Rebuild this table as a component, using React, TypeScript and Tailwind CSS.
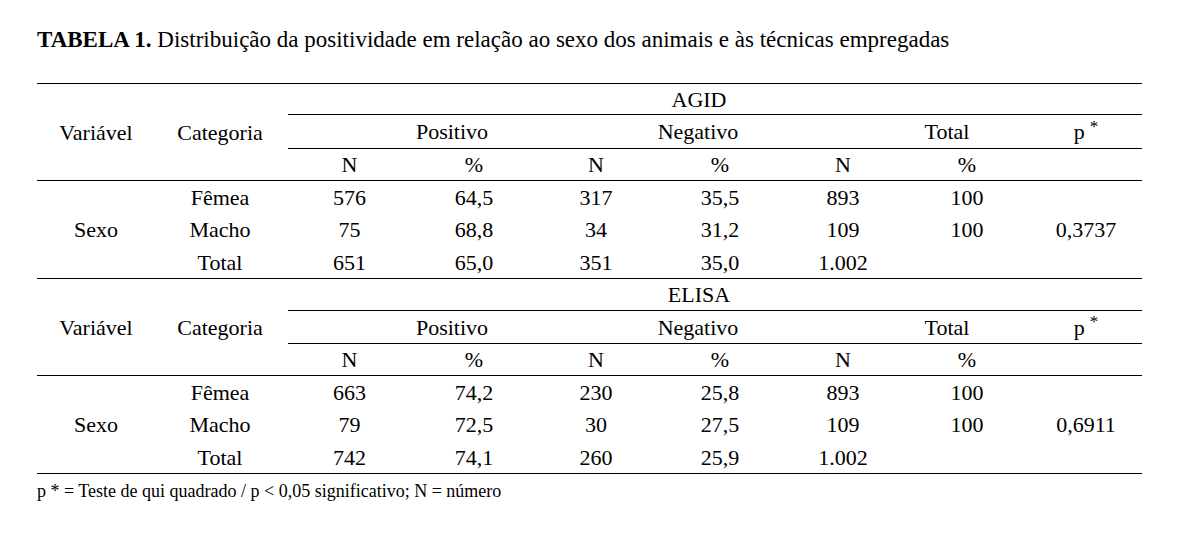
import React from 'react';

type Row = { cat: string; pn: string; pp: string; nn: string; np: string; tn: string; tp: string };

interface SectionProps {
  method: string;
  rows: Row[];
  p: string;
  first?: boolean;
}

const cols = 'grid-cols-[118px_130px_129px_120px_124px_124px_122px_126px_112px]';

const Cell = ({ children, className = '' }: { children?: React.ReactNode; className?: string }) => (
  <div className={`flex items-center justify-center font-['Liberation_Serif'] ${className}`}>{children}</div>
);

const Section = ({ method, rows, p, first }: SectionProps) => {
  return (
    <div
      className={`grid ${cols} border-b border-black ${
        first
          ? 'grid-rows-[31px_34px_32px_32px_33px_32px]'
          : 'grid-rows-[32px_33px_32px_32px_33px_32px]'
      }`}
    >
      {/* Header: Variável / Categoria span three header rows */}
      <Cell className="row-span-3 border-b border-black">Variável</Cell>
      <Cell className="row-span-3 border-b border-black">Categoria</Cell>

      {/* method name */}
      <Cell className="col-span-7 ml-[3px] border-b border-black pr-[32px]">{method}</Cell>

      {/* Positivo / Negativo / Total / p* */}
      <div className="col-span-7 ml-[3px] flex border-b border-black">
        <Cell className="w-[328px]">Positivo</Cell>
        <Cell className="w-[164px]">Negativo</Cell>
        <div className="w-[108px]" />
        <Cell className="w-[118px]">Total</Cell>
        <div className="w-[24px]" />
        <Cell className="w-[112px]">
          p{' '}
          <span className="relative top-[-5px] ml-[5px] font-['Liberation_Serif'] text-[17px]">*</span>
        </Cell>
      </div>

      {/* N / % */}
      <Cell className="border-b border-black">N</Cell>
      <Cell className="border-b border-black">%</Cell>
      <Cell className="border-b border-black">N</Cell>
      <Cell className="border-b border-black">%</Cell>
      <Cell className="border-b border-black">N</Cell>
      <Cell className="border-b border-black">%</Cell>
      <Cell className="border-b border-black" />

      {/* data */}
      <Cell className="row-span-3">Sexo</Cell>
      {rows.map((r, i) => (
        <React.Fragment key={r.cat}>
          <Cell>{r.cat}</Cell>
          <Cell>{r.pn}</Cell>
          <Cell>{r.pp}</Cell>
          <Cell>{r.nn}</Cell>
          <Cell>{r.np}</Cell>
          <Cell>{r.tn}</Cell>
          <Cell>{r.tp}</Cell>
          <Cell>{i === 1 ? p : ''}</Cell>
        </React.Fragment>
      ))}
    </div>
  );
};

const agid: Row[] = [
  { cat: 'Fêmea', pn: '576', pp: '64,5', nn: '317', np: '35,5', tn: '893', tp: '100' },
  { cat: 'Macho', pn: '75', pp: '68,8', nn: '34', np: '31,2', tn: '109', tp: '100' },
  { cat: 'Total', pn: '651', pp: '65,0', nn: '351', np: '35,0', tn: '1.002', tp: '' },
];

const elisa: Row[] = [
  { cat: 'Fêmea', pn: '663', pp: '74,2', nn: '230', np: '25,8', tn: '893', tp: '100' },
  { cat: 'Macho', pn: '79', pp: '72,5', nn: '30', np: '27,5', tn: '109', tp: '100' },
  { cat: 'Total', pn: '742', pp: '74,1', nn: '260', np: '25,9', tn: '1.002', tp: '' },
];

export default function App() {
  return (
    <div className="h-[540px] w-[1191px] bg-white text-black">
      <div className="pl-[37px] pt-[27px]">
        <p className="font-['Liberation_Serif'] text-[23px] leading-[26px]">
          <span className="font-['Liberation_Serif'] font-bold">TABELA 1.</span> Distribuição da positividade em
          relação ao sexo dos animais e às técnicas empregadas
        </p>
      </div>

      <div className="ml-[37px] mt-[30px] w-[1105px] border-t border-black text-[22px]">
        <Section method="AGID" rows={agid} p="0,3737" first />
        <Section method="ELISA" rows={elisa} p="0,6911" />
      </div>

      <p className="ml-[37px] mt-[6px] font-['Liberation_Serif'] text-[18px] leading-[22px]">
        p * = Teste de qui quadrado / p &lt; 0,05 significativo; N = número
      </p>
    </div>
  );
}
